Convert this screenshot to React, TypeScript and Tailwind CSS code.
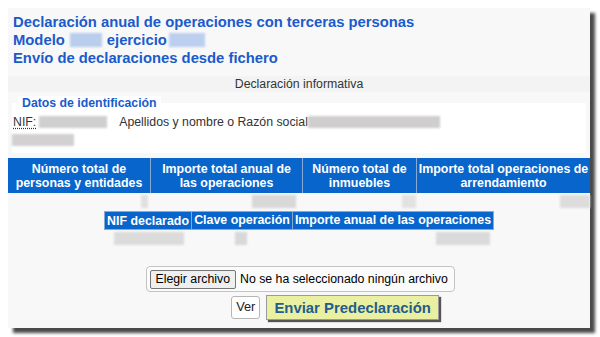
import React from 'react';

const font = { fontFamily: '"Liberation Sans", Arial, sans-serif' };

function Blur({ className }: { className: string }) {
  return <span className={`inline-block align-middle blur-[1px] ${className}`} />;
}

const headers = [
  { w: 'w-[142px]', label: ['Número total de', 'personas y entidades'] },
  { w: 'w-[152px]', label: ['Importe total anual de', 'las operaciones'] },
  { w: 'w-[114px]', label: ['Número total de', 'inmuebles'] },
  { w: 'w-[174px]', label: ['Importe total operaciones de', 'arrendamiento'] },
];

export default function App() {
  return (
    <div className="w-[600px] h-[337px] bg-white pt-2 pl-2" style={font}>
      <div className="w-[582px] h-[320px] bg-[#f8f8f8] shadow-[5px_5px_3px_#4a4a4a] flex flex-col">
        {/* titulo */}
        <div className="pt-[5px] pl-[5px] text-[14.8px] leading-[18px] font-bold text-[#1a5bcc]">
          <div>Declaración anual de operaciones con terceras personas</div>
          <div className="flex items-center">
            Modelo
            <Blur className="ml-[5px] mr-[5px] w-[32px] h-[14px] bg-[#b9cdec]" />
            ejercicio
            <Blur className="ml-[2px] w-[36px] h-[14px] bg-[#bccfee]" />
          </div>
          <div>Envío de declaraciones desde fichero</div>
        </div>

        <div className="mt-[9px] h-[16px] leading-[16px] bg-[#f3f3f3] text-center text-[12.3px] text-[#333]">
          Declaración informativa
        </div>

        {/* datos de identificacion */}
        <div className="relative mt-[11px] mx-[4px] h-[50px] bg-white">
          <div className="absolute -top-[7px] left-[6px] bg-white px-[4px] text-[12.3px] leading-[14px] font-bold text-[#1a5bcc]">
            Datos de identificación
          </div>
          <div className="pt-[12px] pl-[1px] flex items-center text-[12.3px] leading-[14px] text-[#333]">
            <span className="underline decoration-dotted underline-offset-2">NIF:</span>
            <Blur className="ml-[3px] w-[68px] h-[12px] bg-[#d0cfcf]" />
            <span className="ml-[12px]">Apellidos y nombre o Razón social</span>
            <Blur className="w-[132px] h-[12px] bg-[#cfcdcd]" />
          </div>
          <div className="pt-[5px] flex">
            <Blur className="w-[62px] h-[12px] bg-[#d2d0d0]" />
          </div>
        </div>

        {/* tabla resumen */}
        <div className="mt-[5px] flex bg-[#0765cb] h-[35px] text-white font-bold text-[12.4px] leading-[14px]">
          {headers.map((h, i) => (
            <div
              key={i}
              className={`${h.w} flex flex-col items-center justify-center ${i > 0 ? 'border-l border-[#86a9d6]' : ''}`}
            >
              <span>{h.label[0]}</span>
              <span>{h.label[1]}</span>
            </div>
          ))}
        </div>
        <div className="flex h-[17px] items-center">
          <div className="w-[142px] flex justify-end pr-[2px]"><Blur className="w-[7px] h-[13px] bg-[#e0e0e0]" /></div>
          <div className="w-[152px] flex justify-end pr-[6px]"><Blur className="w-[44px] h-[13px] bg-[#d9d8d8]" /></div>
          <div className="w-[114px] flex justify-end"><Blur className="w-[14px] h-[13px] bg-[#e2e2e2]" /></div>
          <div className="w-[174px] flex justify-end"><Blur className="w-[30px] h-[13px] bg-[#dcdcdc]" /></div>
        </div>

        {/* tabla detalle */}
        <div className="mt-[1px] mx-auto flex bg-[#0765cb] h-[19px] items-center text-white font-bold text-[12.4px] leading-[14px] border border-[#86a9d6]">
          <div className="w-[86px] text-center">NIF declarado</div>
          <div className="w-[101px] text-center border-l border-[#86a9d6] h-full leading-[17px]">Clave operación</div>
          <div className="w-[201px] text-center border-l border-[#86a9d6] h-full leading-[17px]">Importe anual de las operaciones</div>
        </div>
        <div className="mx-auto w-[390px] flex h-[17px] items-center">
          <div className="w-[86px] flex justify-center pl-[4px]"><Blur className="w-[70px] h-[13px] bg-[#dcdbdb]" /></div>
          <div className="w-[101px] flex justify-center"><Blur className="w-[12px] h-[13px] bg-[#d8d8d8]" /></div>
          <div className="w-[201px] flex justify-end pr-[2px]"><Blur className="w-[54px] h-[13px] bg-[#dbdada]" /></div>
        </div>

        {/* fichero */}
        <div className="mt-[19px] flex justify-center">
          <div className="ml-[2px] flex items-center h-[26px] w-[309px] border border-[#c4c4c4] rounded-[4px] bg-[#fbfbfb] px-[3px] text-[12.3px] text-black">
            <span className="h-[19px] px-[5px] leading-[17px] bg-[#efefef] border border-[#767676] rounded-[2px]">
              Elegir archivo
            </span>
            <span className="ml-[4px]">No se ha seleccionado ningún archivo</span>
          </div>
        </div>

        <div className="mt-[3px] flex justify-center items-center gap-[6px] pl-[72px]">
          <span className="h-[23px] px-[4px] leading-[20px] bg-white border border-[#b5b5b5] rounded-[3px] text-[12.8px] text-[#222]">
            Ver
          </span>
          <span className="h-[25px] px-[7px] leading-[24px] bg-[#eaf0a2] border border-[#9a9a9a] shadow-[2px_2px_1px_#555] text-[14.9px] font-bold text-[#235d8c]">
            Enviar Predeclaración
          </span>
        </div>
      </div>
    </div>
  );
}
